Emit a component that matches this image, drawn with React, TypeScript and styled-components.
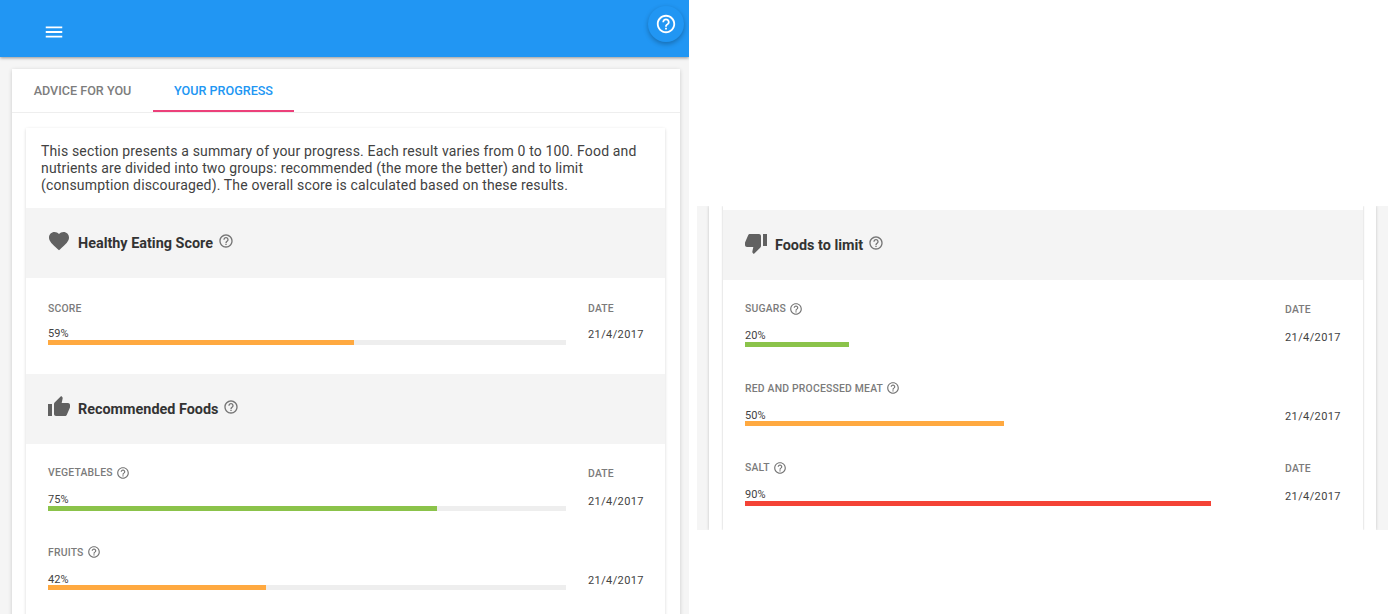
import { ReactNode } from "react";
import { MdFavorite, MdHelpOutline, MdMenu, MdThumbDown, MdThumbUp } from "react-icons/md";
import styled, { createGlobalStyle } from "styled-components";

const GREEN = "#8bc34a";
const ORANGE = "#ffa940";
const RED = "#f44336";

const GlobalStyle = createGlobalStyle`
  html, body {
    margin: 0;
    height: 614px;
    overflow: hidden;
    background: #fff;
    font-family: Roboto, "Liberation Sans", sans-serif;
    color: #424242;
  }
`;

type Metric = { label: string; value: number; color: string; help?: boolean; noDateLabel?: boolean };

function Row({ metric, track }: { metric: Metric; track: boolean }) {
  return (
    <MetricRow>
      <div>
        <MetricLabel>
          {metric.label}
          {metric.help && <MdHelpOutline size={14} color="#757575" />}
        </MetricLabel>
        <Percent>{metric.value}%</Percent>
        <Track $visible={track}>
          <Fill $color={metric.color} style={{ width: `${metric.value}%` }} />
        </Track>
      </div>
      <DateCol $shifted={metric.help}>
        <DateLabel $hidden={metric.noDateLabel}>DATE</DateLabel>
        <DateValue>21/4/2017</DateValue>
      </DateCol>
    </MetricRow>
  );
}

function SectionTitle({ icon, title }: { icon: ReactNode; title: string }) {
  return (
    <SectionHead>
      <IconSlot>{icon}</IconSlot>
      <SectionName>{title}</SectionName>
      <HelpSlot>
        <MdHelpOutline size={16} color="#757575" />
      </HelpSlot>
    </SectionHead>
  );
}

function App() {
  return (
    <Page>
      <GlobalStyle />
      <LeftShot>
        <AppBar>
          <MenuButton>
            <MdMenu size={22} color="#fff" />
          </MenuButton>
          <HelpFab>
            <MdHelpOutline size={22} color="#fff" />
          </HelpFab>
        </AppBar>
        <Card>
          <Tabs>
            <Tab>ADVICE FOR YOU</Tab>
            <Tab $active>YOUR PROGRESS</Tab>
          </Tabs>
          <InnerCard>
            <Intro>
              This section presents a summary of your progress. Each result varies from 0 to 100. Food and
              nutrients are divided into two groups: recommended (the more the better) and to limit
              (consumption discouraged). The overall score is calculated based on these results.
            </Intro>
            <SectionTitle icon={<MdFavorite size={24} color="#616161" />} title="Healthy Eating Score" />
            <ScoreBlock>
              <Row metric={{ label: "SCORE", value: 59, color: ORANGE }} track />
            </ScoreBlock>
            <SectionTitle icon={<MdThumbUp size={24} color="#616161" />} title="Recommended Foods" />
            <RowList>
              <Row metric={{ label: "VEGETABLES", value: 75, color: GREEN, help: true }} track />
              <Row metric={{ label: "FRUITS", value: 42, color: ORANGE, help: true, noDateLabel: true }} track />
            </RowList>
          </InnerCard>
        </Card>
      </LeftShot>
      <RightShot>
        <RightCard>
          <RightInner>
            <SectionTitle icon={<MdThumbDown size={24} color="#616161" />} title="Foods to limit" />
            <RowList>
              <Row metric={{ label: "SUGARS", value: 20, color: GREEN, help: true }} track={false} />
              <Row
                metric={{ label: "RED AND PROCESSED MEAT", value: 50, color: ORANGE, help: true, noDateLabel: true }}
                track={false}
              />
              <Row metric={{ label: "SALT", value: 90, color: RED, help: true }} track={false} />
            </RowList>
          </RightInner>
        </RightCard>
      </RightShot>
    </Page>
  );
}
export default App;

const Page = styled.div`
  display: flex;
  align-items: flex-start;
  width: 1400px;
  height: 614px;
  overflow: hidden;
`;

const LeftShot = styled.div`
  flex: 0 0 689px;
  height: 614px;
  overflow: hidden;
  background: #f5f5f5;
`;

const AppBar = styled.header`
  position: relative;
  display: flex;
  align-items: center;
  justify-content: space-between;
  height: 57px;
  padding: 0 5px 0 43px;
  box-sizing: border-box;
  background: #2196f3;
  box-shadow: 0 1px 3px rgba(0, 0, 0, 0.4);
`;

const MenuButton = styled.div`
  display: flex;
  margin-top: 6px;
`;

const HelpFab = styled.div`
  display: flex;
  align-items: center;
  justify-content: center;
  width: 36px;
  height: 36px;
  margin-bottom: 9px;
  border-radius: 50%;
  background: #2196f3;
  box-shadow: 0 2px 5px rgba(0, 0, 0, 0.28);
`;

const Card = styled.div`
  height: 620px;
  margin: 12px 9px 0 12px;
  background: #fff;
  box-shadow: 0 1px 4px rgba(0, 0, 0, 0.18);
`;

const Tabs = styled.div`
  display: flex;
  height: 43px;
  border-bottom: 1px solid #eeeeee;
`;

const Tab = styled.div<{ $active?: boolean }>`
  width: 141px;
  box-sizing: border-box;
  padding-top: 15px;
  text-align: center;
  font-size: 12.6px;
  font-weight: 500;
  line-height: 14px;
  color: ${(p) => (p.$active ? "#2196f3" : "#7d7d7d")};
  border-bottom: 2px solid ${(p) => (p.$active ? "#ec407a" : "transparent")};
`;

const InnerCard = styled.div`
  height: 560px;
  margin: 15px 15px 0 14px;
  background: #fff;
  box-shadow: 0 1px 3px rgba(0, 0, 0, 0.16);
`;

const Intro = styled.p`
  margin: 0;
  padding: 15px 15px 14px;
  font-size: 14px;
  line-height: 17px;
  letter-spacing: 0.155px;
  color: #424242;
`;

const SectionHead = styled.div`
  display: flex;
  align-items: center;
  height: 70px;
  padding-left: 21px;
  background: #f4f4f4;
`;

const IconSlot = styled.div`
  display: flex;
  width: 31px;
  margin-top: -4px;
`;

const SectionName = styled.h3`
  margin: 0 5px 0 0;
  font-size: 14.4px;
  font-weight: 700;
  color: #333;
`;

const HelpSlot = styled.span`
  display: flex;
  margin-top: -5px;
`;

const RowList = styled.div`
  display: flex;
  flex-direction: column;
`;

const MetricRow = styled.div`
  display: grid;
  grid-template-columns: 518px auto;
  column-gap: 22px;
  height: 79.5px;
  box-sizing: border-box;
  padding: 21.5px 0 0 22px;
`;

const MetricLabel = styled.div`
  display: flex;
  align-items: center;
  gap: 3px;
  height: 14px;
  font-size: 10.4px;
  font-weight: 500;
  letter-spacing: 0.2px;
  color: #7b7b7b;
`;

const Percent = styled.div`
  margin-top: 13.5px;
  font-size: 11px;
  line-height: 13px;
  color: #424242;
`;

const Track = styled.div<{ $visible: boolean }>`
  height: 5px;
  margin-top: -0.5px;
  background: ${(p) => (p.$visible ? "#eeeeee" : "transparent")};
`;

const Fill = styled.div<{ $color: string }>`
  height: 100%;
  background: ${(p) => p.$color};
`;

const DateCol = styled.div<{ $shifted?: boolean }>`
  display: flex;
  flex-direction: column;
  margin-top: ${(p) => (p.$shifted ? "1px" : "0")};
`;

const DateLabel = styled(MetricLabel)<{ $hidden?: boolean }>`
  visibility: ${(p) => (p.$hidden ? "hidden" : "visible")};
`;

const DateValue = styled.div`
  margin-top: 14px;
  font-size: 11px;
  line-height: 13px;
  letter-spacing: 0.4px;
  color: #424242;
`;

// the score row has no help icons, its labels sit a little lower
const ScoreBlock = styled.div`
  height: 96px;

  ${MetricLabel} {
    margin-top: 1.5px;
  }
  ${Percent} {
    margin-top: 12px;
  }
  ${DateValue} {
    margin-top: 12.5px;
  }
`;

const RightShot = styled.div`
  flex: 0 0 691px;
  height: 324px;
  margin: 206px 0 0 8px;
  padding: 0 12px;
  box-sizing: border-box;
  overflow: hidden;
  background: #f5f5f5;
`;

const RightCard = styled.div`
  height: 100%;
  padding: 0 13px 0 14px;
  background: #fff;
  box-shadow: 0 0 3px rgba(0, 0, 0, 0.2);
`;

const RightInner = styled.div`
  height: 100%;
  padding-top: 4px;
  box-sizing: border-box;
  background: #fff;
  box-shadow: 0 0 2px rgba(0, 0, 0, 0.25);
`;
